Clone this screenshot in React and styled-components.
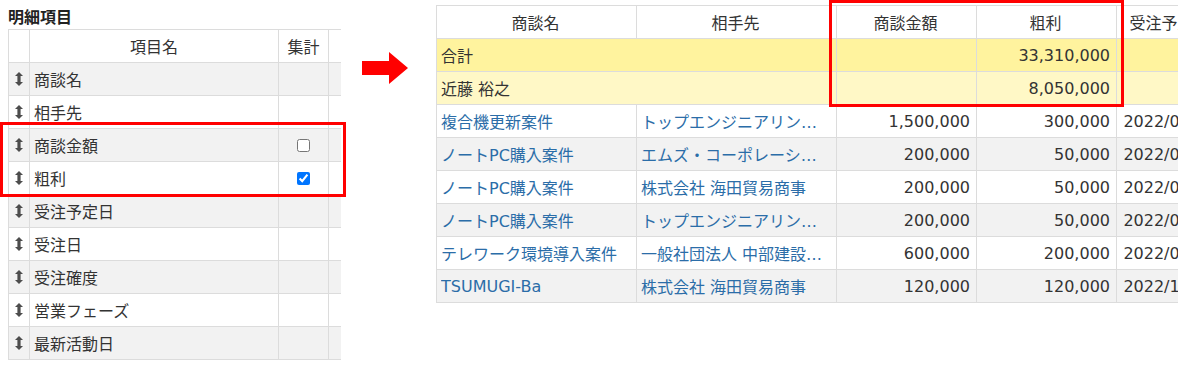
import React from 'react';
import styled, { createGlobalStyle } from 'styled-components';

const GlobalStyle = createGlobalStyle`
  body {
    margin: 0;
    background: #fff;
    font-family: 'DejaVu Sans', 'Noto Sans CJK JP', sans-serif;
    color: #333;
  }
`;

const Page = styled.div`
  display: flex;
  width: 1178px;
  height: 366px;
  overflow: hidden;
`;

const LeftPanel = styled.div`
  position: relative;
  flex: none;
  width: 340px;
  padding-left: 8px;
  box-sizing: border-box;
`;

const Title = styled.div`
  height: 29px;
  box-sizing: border-box;
  padding-top: 4px;
  line-height: 24px;
  font-family: 'Noto Sans CJK JP', sans-serif;
  font-size: 16px;
  font-weight: bold;
  color: #222;
`;

const LeftTable = styled.div`
  width: 332px;
  overflow: hidden;
  border-top: 1px solid #dcdcdc;
  border-left: 1px solid #dcdcdc;
`;

const LeftRow = styled.div`
  display: grid;
  grid-template-columns: 21px 249px 50px 60px;
  height: 33px;
  box-sizing: border-box;
  border-bottom: 1px solid #dcdcdc;
  background: ${p => (p.$alt ? '#f2f2f2' : '#fff')};
`;

const LCell = styled.div`
  display: flex;
  align-items: center;
  justify-content: ${p => (p.$center ? 'center' : 'flex-start')};
  padding: 0 ${p => (p.$tight ? 0 : 4)}px;
  border-right: 1px solid #dcdcdc;
  font-size: 16px;
  white-space: nowrap;
  overflow: hidden;
`;

const Check = styled.input`
  margin: 0;
  width: 13px;
  height: 13px;
  accent-color: #0075ff;
`;

const Highlight = styled.div`
  position: absolute;
  z-index: 2;
  left: ${p => p.$x}px;
  top: ${p => p.$y}px;
  width: ${p => p.$w}px;
  height: ${p => p.$h}px;
  box-sizing: border-box;
  border: 3px solid #ff0000;
  pointer-events: none;
`;

const ArrowCol = styled.div`
  flex: none;
  width: 96px;
  padding: 52px 0 0 22px;
  box-sizing: border-box;
`;

const RightPanel = styled.div`
  position: relative;
  flex: 1;
  overflow: hidden;
  padding-top: 5px;
`;

const RightTable = styled.div`
  width: max-content;
  border-top: 1px solid #dcdcdc;
  border-left: 1px solid #dcdcdc;
`;

const RightRow = styled.div`
  display: grid;
  grid-template-columns: 200px 200px 140px 140px 108px;
  height: 33px;
  box-sizing: border-box;
  border-bottom: 1px solid #dcdcdc;
  background: ${p => p.$bg || '#fff'};
`;

const RCell = styled.div`
  grid-column: ${p => (p.$span ? `span ${p.$span}` : 'auto')};
  display: flex;
  align-items: center;
  justify-content: ${p =>
    p.$align === 'right' ? 'flex-end' : p.$align === 'center' ? 'center' : 'flex-start'};
  padding: 0 6px 0 4px;
  border-right: 1px solid #dcdcdc;
  font-size: 16px;
  color: ${p => (p.$link ? '#2b6da8' : '#333')};
  overflow: hidden;
  min-width: 0;
`;

const Clip = styled.span`
  display: block;
  white-space: nowrap;
  overflow: hidden;
  text-overflow: ellipsis;
`;

const Handle = () => (
  <svg width="8" height="14" viewBox="0 0 8 14">
    <path d="M4 0 L8 4 L5.6 4 L5.6 10 L8 10 L4 14 L0 10 L2.4 10 L2.4 4 L0 4 Z" fill="#4d4d4d" />
  </svg>
);

const RedArrow = () => (
  <svg width="46" height="32" viewBox="0 0 46 32">
    <path d="M0 9 L27 9 L27 0 L46 16 L27 32 L27 23 L0 23 Z" fill="#ff0000" />
  </svg>
);

const items = [
  { name: '商談名' },
  { name: '相手先' },
  { name: '商談金額', check: false },
  { name: '粗利', check: true },
  { name: '受注予定日' },
  { name: '受注日' },
  { name: '受注確度' },
  { name: '営業フェーズ' },
  { name: '最新活動日' },
];

const deals = [
  ['複合機更新案件', 'トップエンジニアリング株式会社', '1,500,000', '300,000', '2022/07/29'],
  ['ノートPC購入案件', 'エムズ・コーポレーション株式会社', '200,000', '50,000', '2022/08/31'],
  ['ノートPC購入案件', '株式会社 海田貿易商事', '200,000', '50,000', '2022/09/15'],
  ['ノートPC購入案件', 'トップエンジニアリング株式会社', '200,000', '50,000', '2022/09/30'],
  ['テレワーク環境導入案件', '一般社団法人 中部建設協会', '600,000', '200,000', '2022/08/10'],
  ['TSUMUGI-Ba', '株式会社 海田貿易商事', '120,000', '120,000', '2022/10/31'],
];

const totals = [
  { label: '合計', value: '33,310,000', bg: '#fff39e' },
  { label: '近藤 裕之', value: '8,050,000', bg: '#fff8c6' },
];

export default function App() {
  return (
    <>
      <GlobalStyle />
      <Page>
        <LeftPanel>
          <Title>明細項目</Title>
          <LeftTable>
            <LeftRow>
              <LCell />
              <LCell $center>項目名</LCell>
              <LCell $center>集計</LCell>
              <LCell />
            </LeftRow>
            {items.map((it, i) => (
              <LeftRow key={it.name} $alt={i % 2 === 0}>
                <LCell $center $tight>
                  <Handle />
                </LCell>
                <LCell>{it.name}</LCell>
                <LCell $center $tight>
                  {it.check !== undefined && (
                    <Check type="checkbox" checked={it.check} readOnly />
                  )}
                </LCell>
                <LCell />
              </LeftRow>
            ))}
          </LeftTable>
          <Highlight $x={0} $y={122} $w={346} $h={75} />
        </LeftPanel>

        <ArrowCol>
          <RedArrow />
        </ArrowCol>

        <RightPanel>
          <RightTable>
            <RightRow>
              <RCell $align="center">商談名</RCell>
              <RCell $align="center">相手先</RCell>
              <RCell $align="center">商談金額</RCell>
              <RCell $align="center">粗利</RCell>
              <RCell $align="center"><Clip>受注予定日</Clip></RCell>
            </RightRow>
            {totals.map(t => (
              <RightRow key={t.label} $bg={t.bg}>
                <RCell $span={2}>{t.label}</RCell>
                <RCell />
                <RCell $align="right">{t.value}</RCell>
                <RCell />
              </RightRow>
            ))}
            {deals.map((d, i) => (
              <RightRow key={i} $bg={i % 2 === 1 ? '#f2f2f2' : '#fff'}>
                <RCell $link><Clip>{d[0]}</Clip></RCell>
                <RCell $link><Clip>{d[1]}</Clip></RCell>
                <RCell $align="right">{d[2]}</RCell>
                <RCell $align="right">{d[3]}</RCell>
                <RCell $align="center"><Clip>{d[4]}</Clip></RCell>
              </RightRow>
            ))}
          </RightTable>
          <Highlight $x={393} $y={0} $w={295} $h={107} />
        </RightPanel>
      </Page>
    </>
  );
}
